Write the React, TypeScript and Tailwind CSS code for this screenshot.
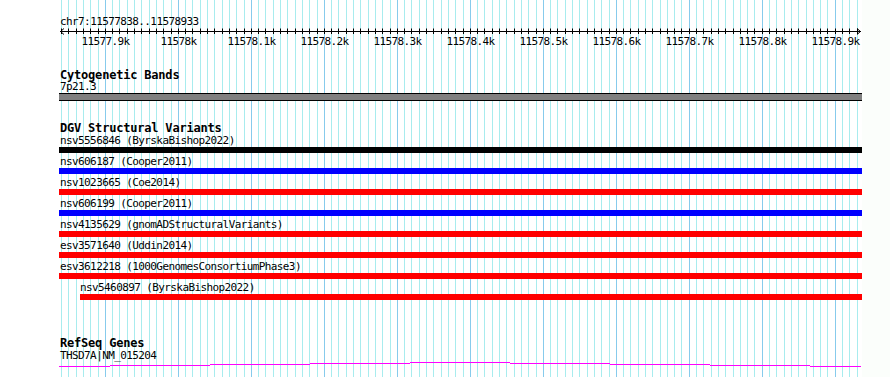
const BP_START = 11577838;
const BP_END = 11578933;

// page x for a base pair position (0.73 px per bp, 11577.9k sits at x=105.3)
const toX = (bp: number) => 105.3 + (bp - 11577900) * 0.73;

const gridStops: { x: number; major: boolean }[] = [];
for (let bp = 11577840; bp <= 11578930; bp += 10) {
  gridStops.push({ x: Math.floor(toX(bp)) + 0.5, major: bp % 100 === 0 });
}

const rulerLabels: { x: number; text: string }[] = [];
for (let bp = 11577900; bp <= 11578900; bp += 100) {
  rulerLabels.push({ x: Math.floor(toX(bp)) + 0.5, text: `${bp / 1000}k` });
}

const variants = [
  { name: "nsv5556846 (ByrskaBishop2022)", color: "bg-black", indent: false },
  { name: "nsv606187 (Cooper2011)", color: "bg-[#0000ff]", indent: false },
  { name: "nsv1023665 (Coe2014)", color: "bg-[#ff0000]", indent: false },
  { name: "nsv606199 (Cooper2011)", color: "bg-[#0000ff]", indent: false },
  { name: "nsv4135629 (gnomADStructuralVariants)", color: "bg-[#ff0000]", indent: false },
  { name: "esv3571640 (Uddin2014)", color: "bg-[#ff0000]", indent: false },
  { name: "esv3612218 (1000GenomesConsortiumPhase3)", color: "bg-[#ff0000]", indent: false },
  { name: "nsv5460897 (ByrskaBishop2022)", color: "bg-[#ff0000]", indent: true },
];

// stepped gene line: [x1, x2, y]
const geneSegments = [
  [59, 110, 366],
  [110, 210, 365],
  [210, 310, 364],
  [310, 410, 363],
  [410, 510, 362],
  [510, 610, 363],
  [610, 710, 364],
  [710, 810, 365],
  [810, 861, 366],
];

const small = "h-[11px] leading-[9px] text-[11px] tracking-[-0.6px] text-black whitespace-nowrap";
const title = "h-[12px] leading-[11px] text-[12px] font-bold tracking-[-0.2px] text-black whitespace-nowrap";

const Grid = () => (
  <svg className="absolute inset-0 pointer-events-none" width={862} height={377}>
    {gridStops.map((g, i) => (
      <line
        key={i}
        x1={g.x}
        x2={g.x}
        y1={0}
        y2={377}
        stroke={g.major ? "#87cbec" : "#a8ecee"}
        strokeWidth={1}
      />
    ))}
  </svg>
);

const Ruler = () => (
  <svg width={862} height={20} className="block">
    <line x1={60} x2={861} y1={3.5} y2={3.5} stroke="black" />
    <polyline points="64,0.5 60.5,3.5 64,6.5" fill="none" stroke="black" />
    <polyline points="857,0.5 860.5,3.5 857,6.5" fill="none" stroke="black" />
    {gridStops.map((g, i) => (
      <line key={i} x1={g.x} x2={g.x} y1={0.5} y2={6} stroke="black" />
    ))}
    {rulerLabels.map((l) => (
      <text
        key={l.text}
        x={l.x}
        y={16.5}
        textAnchor="middle"
        fontSize={11}
        letterSpacing={-0.6}
        fontFamily="'DejaVu Sans Mono', monospace"
        fill="black"
      >
        {l.text}
      </text>
    ))}
  </svg>
);

export default function App() {
  return (
    <div className="flex w-[890px] h-[377px] overflow-hidden bg-[#fbfefb] font-['DejaVu_Sans_Mono',monospace]">
      <div className="relative w-[862px] h-full shrink-0 bg-white">
        <Grid />

        <div className="relative flex flex-col">
          {/* ruler */}
          <div className={`${small} mt-[17px] ml-[60px]`}>
            chr7:{BP_START}..{BP_END}
          </div>
          <Ruler />

          {/* cytogenetic bands */}
          <div className={`${title} mt-[22px] ml-[60px]`}>Cytogenetic Bands</div>
          <div className={`${small} ml-[60px]`}>7p21.3</div>
          <div className="ml-[59px] w-[803px] h-[8px] border-y border-black bg-[#808080]" />

          {/* DGV */}
          <div className={`${title} mt-[22px] ml-[60px]`}>DGV Structural Variants</div>
          <div className="flex flex-col gap-[4px] mt-[1px]">
            {variants.map((v) => (
              <div key={v.name} className={v.indent ? "ml-[80px]" : "ml-[59px]"}>
                <div className={`${small} ${v.indent ? "" : "pl-[1px]"}`}>{v.name}</div>
                <div className={`h-[6px] ${v.color} ${v.indent ? "w-[782px]" : "w-[803px]"}`} />
              </div>
            ))}
          </div>

          {/* RefSeq */}
          <div className={`${title} mt-[38px] ml-[60px]`}>RefSeq Genes</div>
          <div className={`${small} mt-[1px] ml-[60px]`}>THSD7A|NM_015204</div>
          <svg width={862} height={6} className="block">
            {geneSegments.map(([x1, x2, y], i) => (
              <rect key={i} x={x1} y={y - 362} width={x2 - x1} height={1} fill="#ff00ff" />
            ))}
          </svg>
        </div>
      </div>
      <div className="flex-1" />
    </div>
  );
}
